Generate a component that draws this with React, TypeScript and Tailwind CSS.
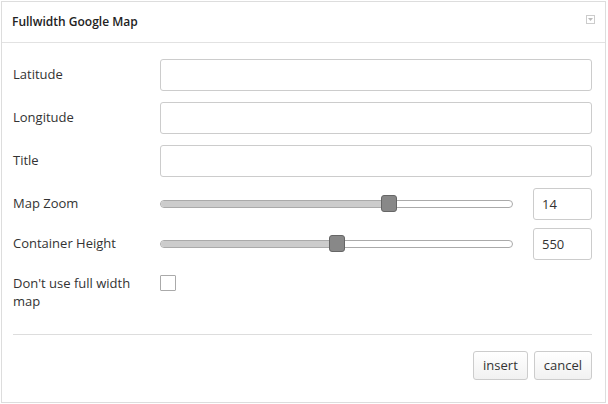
import React from 'react';

const font = { fontFamily: '"Open Sans", "Noto Sans", sans-serif' };

interface RowProps {
  label: string;
  children: React.ReactNode;
  className?: string;
}

const Row: React.FC<RowProps> = ({ label, children, className }) => (
  <div className={`flex items-center ${className ?? ''}`}>
    <label className="w-[147px] shrink-0 text-[13px] text-[#333]">{label}</label>
    <div className="flex flex-1 items-center">{children}</div>
  </div>
);

const TextInput = () => (
  <input type="text" className="h-[32px] w-full rounded-[3px] border border-[#ccc] bg-white px-2 text-[13px] outline-none" />
);

const Slider: React.FC<{ percent: number; value: string }> = ({ percent, value }) => (
  <>
    <div className="relative h-[32px] w-[353px]">
      <div className="absolute left-0 right-0 top-[12px] flex h-[8px] overflow-hidden rounded-full border border-[#aaa] bg-white">
        <div className="h-full bg-[#ccc]" style={{ width: `${percent}%` }} />
      </div>
      <div
        className="absolute top-[7px] h-[17px] w-[16px] -translate-x-1/2 rounded-[3px] border border-[#666] bg-[#888]"
        style={{ left: `${percent}%` }}
      />
    </div>
    <input
      type="text"
      defaultValue={value}
      className="ml-auto h-[32px] w-[59px] rounded-[3px] border border-[#ccc] bg-white px-[8px] text-[13px] text-[#333] outline-none"
    />
  </>
);

export default function App() {
  return (
    <div className="h-[404px] w-[608px] bg-white p-[1px]" style={font}>
      <div className="flex h-[402px] w-[605px] flex-col border border-[#ddd]">
        <div className="flex h-[41px] shrink-0 items-center justify-between border-b border-[#e2e2e2] pl-[10px] pr-[10px]">
          <span className="text-[12px] font-semibold text-[#222]">Fullwidth Google Map</span>
          <span className="mb-[5px] flex h-[9px] w-[9px] items-center justify-center border border-[#ccc]">
            <svg width="5" height="3" viewBox="0 0 5 3">
              <path d="M0 0h5L2.5 3z" fill="#bbb" />
            </svg>
          </span>
        </div>
        <div className="flex flex-col pl-[11px] pr-[13px] pt-[16px]">
          <Row label="Latitude" className="mb-[11px]">
            <TextInput />
          </Row>
          <Row label="Longitude" className="mb-[11px]">
            <TextInput />
          </Row>
          <Row label="Title" className="mb-[11px]">
            <TextInput />
          </Row>
          <Row label="Map Zoom" className="mb-[8px]">
            <Slider percent={65} value="14" />
          </Row>
          <Row label="Container Height" className="mb-[14px]">
            <Slider percent={50} value="550" />
          </Row>
          <div className="flex items-start">
            <label className="w-[147px] shrink-0 pr-[10px] text-[13px] leading-[18px] text-[#333]">
              Don't use full width map
            </label>
            <span className="mt-[1px] h-[16px] w-[16px] rounded-[1px] border border-[#aaa] bg-white" />
          </div>
          <div className="mt-[24px] border-t border-[#ddd]" />
          <div className="mt-[16px] flex justify-end gap-[6px]">
            <button className="h-[29px] rounded-[3px] border border-[#ccc] bg-gradient-to-b from-white to-[#f1f1f1] px-[9px] text-[13px] text-[#333]">
              insert
            </button>
            <button className="h-[29px] rounded-[3px] border border-[#ccc] bg-gradient-to-b from-white to-[#f1f1f1] px-[9px] text-[13px] text-[#333]">
              cancel
            </button>
          </div>
        </div>
      </div>
    </div>
  );
}
